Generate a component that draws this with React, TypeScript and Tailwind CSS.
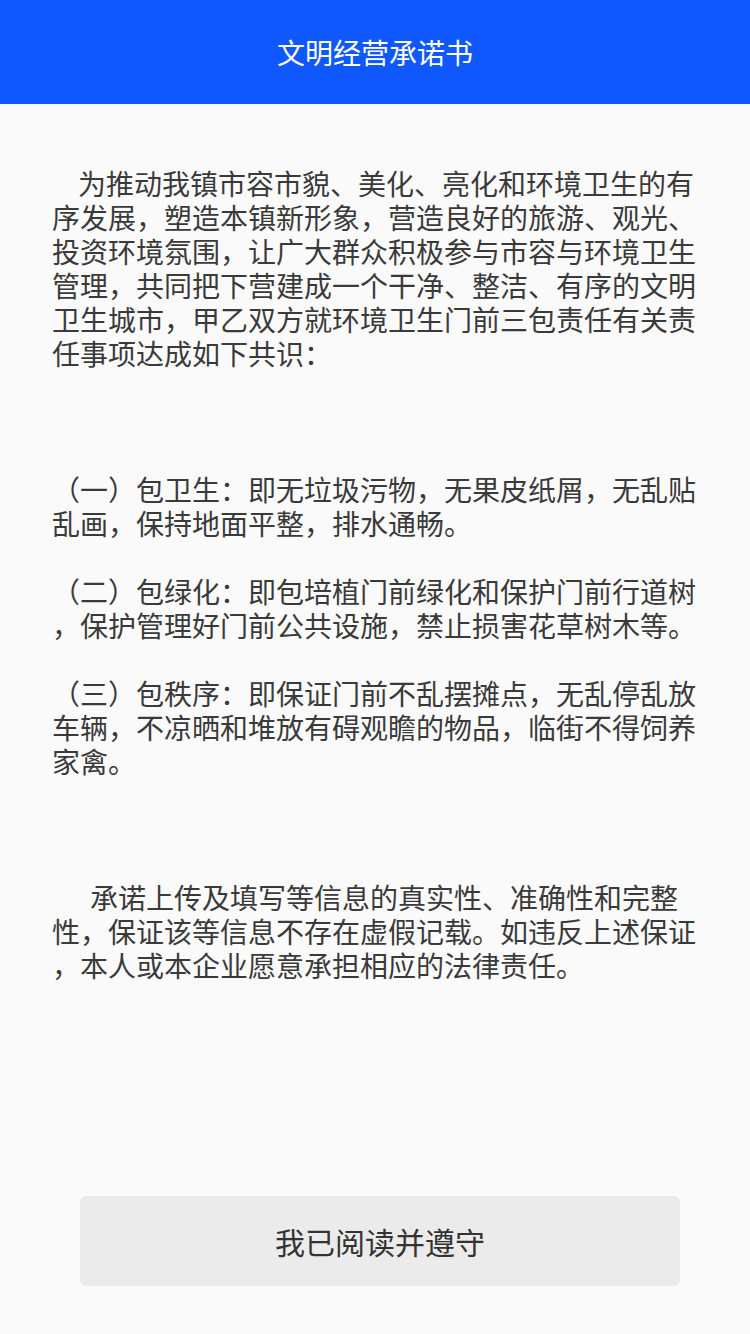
import React from "react";

const intro = [
  "为推动我镇市容市貌、美化、亮化和环境卫生的有",
  "序发展，塑造本镇新形象，营造良好的旅游、观光、",
  "投资环境氛围，让广大群众积极参与市容与环境卫生",
  "管理，共同把下营建成一个干净、整洁、有序的文明",
  "卫生城市，甲乙双方就环境卫生门前三包责任有关责",
  "任事项达成如下共识：",
];

const items = [
  ["（一）包卫生：即无垃圾污物，无果皮纸屑，无乱贴", "乱画，保持地面平整，排水通畅。"],
  ["（二）包绿化：即包培植门前绿化和保护门前行道树", "，保护管理好门前公共设施，禁止损害花草树木等。"],
  [
    "（三）包秩序：即保证门前不乱摆摊点，无乱停乱放",
    "车辆，不凉晒和堆放有碍观瞻的物品，临街不得饲养",
    "家禽。",
  ],
];

const pledge = [
  "承诺上传及填写等信息的真实性、准确性和完整",
  "性，保证该等信息不存在虚假记载。如违反上述保证",
  "，本人或本企业愿意承担相应的法律责任。",
];

function Lines({ lines, indent }: { lines: string[]; indent?: string }) {
  return (
    <div>
      {lines.map((l, i) => (
        <div key={i} className={`whitespace-nowrap ${i === 0 && indent ? indent : ""}`}>
          {l}
        </div>
      ))}
    </div>
  );
}

export default function App() {
  return (
    <div
      className="min-h-[1334px] bg-[#fafafa] flex flex-col"
      style={{ fontFamily: '"Noto Sans CJK SC", "Noto Sans", sans-serif' }}
    >
      {/* Header */}
      <header className="h-[104px] bg-[#0f58fd] flex items-center justify-center shrink-0">
        <h1 className="text-white text-[28px] leading-none font-normal">文明经营承诺书</h1>
      </header>

      {/* Content */}
      <main className="flex-1 px-[52px] pt-[62px] text-[28px] leading-[34px] text-[#3a3a3a]">
        <Lines lines={intro} indent="pl-[26px]" />

        <div className="mt-[102px] flex flex-col gap-[34px]">
          {items.map((it, i) => (
            <Lines key={i} lines={it} />
          ))}
        </div>

        <div className="mt-[102px]">
          <Lines lines={pledge} indent="pl-[38px]" />
        </div>
      </main>

      {/* Button */}
      <div className="pl-[80px] pr-[70px] pb-[48px] shrink-0">
        <button className="w-full h-[90px] rounded-[6px] bg-[#ebebeb] text-[30px] text-[#333333] flex items-center justify-center">
          我已阅读并遵守
        </button>
      </div>
    </div>
  );
}
